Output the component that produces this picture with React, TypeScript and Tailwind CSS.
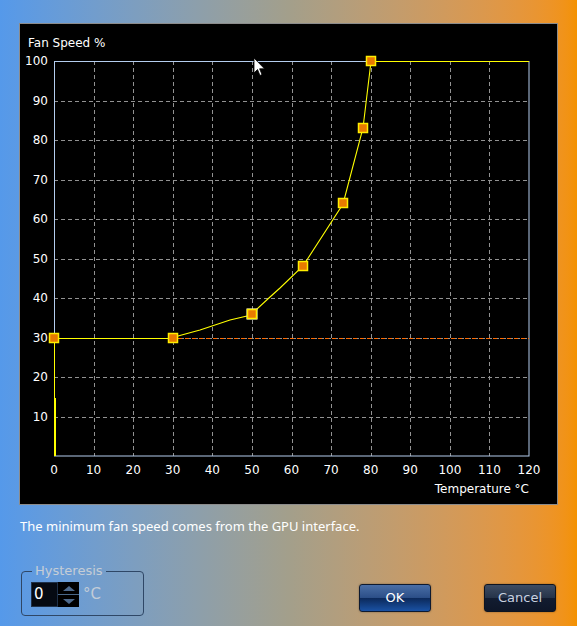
import React from "react";

const PX0 = 54;
const PY0 = 456;
const PW = 475;
const PH = 395;
const xs = (t: number) => PX0 + (t * PW) / 120;
const ys = (s: number) => PY0 - (s * PH) / 100;

const points: [number, number][] = [
  [0, 30],
  [30, 30],
  [50, 36],
  [63, 48],
  [73, 64],
  [78, 83],
  [80, 100],
];

function Chart() {
  const vlines = Array.from({ length: 11 }, (_, i) => Math.round(xs((i + 1) * 10)) + 0.5);
  const hlines = Array.from({ length: 9 }, (_, i) => Math.round(ys((i + 1) * 10)) + 0.5);
  const curve =
    "M54.5,338.5 L173,338.5 L178,336 L200,330 L230,320 L247,316 L252,313.5 L270,297 L280,288 L303,266 L343,204 L363,128 L371,61.5 L529,61.5";
  return (
    <svg
      width={537}
      height={480}
      viewBox="20 24 537 480"
      className="block"
      style={{ fontFamily: '"DejaVu Sans", sans-serif' }}
    >
      {vlines.map((x, i) => (
        <line key={"v" + i} x1={x} y1={61} x2={x} y2={456} stroke="#929292" strokeWidth={1} strokeDasharray="4 3" />
      ))}
      {hlines.map((y, i) => (
        <line key={"h" + i} x1={54} y1={y} x2={529} y2={y} stroke="#929292" strokeWidth={1} strokeDasharray="4 3" />
      ))}
      <rect x={54.5} y={61.5} width={474.5} height={394.5} fill="none" stroke="#b4cdee" strokeWidth={1} />
      <line x1={178} y1={338.5} x2={529} y2={338.5} stroke="#ff6a00" strokeWidth={1} strokeDasharray="4 3" />
      <line x1={54.5} y1={338} x2={54.5} y2={456} stroke="#ffff00" strokeWidth={1} />
      <line x1={55.5} y1={398} x2={55.5} y2={456} stroke="#ffff00" strokeWidth={1} />
      <path d={curve} fill="none" stroke="#ffff00" strokeWidth={1.1} />
      {points.map(([t, s], i) => {
        const cx = Math.round(xs(t));
        const cy = Math.round(ys(s));
        return (
          <g key={"p" + i}>
            {i === 2 && <rect x={cx - 5.5} y={cy - 5.5} width={11} height={11} fill="#ffffff" />}
            <rect x={cx - 4.5} y={cy - 4.5} width={9} height={9} fill="#e87a00" stroke="#ffee00" strokeWidth={1.5} />
          </g>
        );
      })}
      <text x={28} y={47} fill="#ffffff" fontSize={12}>
        Fan Speed %
      </text>
      {Array.from({ length: 10 }, (_, i) => (i + 1) * 10).map((v) => (
        <text key={"yl" + v} x={48} y={ys(v) + 4} fill="#ffffff" fontSize={12} textAnchor="end">
          {v}
        </text>
      ))}
      {Array.from({ length: 13 }, (_, i) => i * 10).map((v) => (
        <text key={"xl" + v} x={xs(v)} y={474} fill="#ffffff" fontSize={12} textAnchor="middle">
          {v}
        </text>
      ))}
      <text x={529} y={493} fill="#ffffff" fontSize={12} textAnchor="end">
        Temperature °C
      </text>
      <path
        d="M254,58 L254,73 L257.5,69.5 L260,75.5 L262,74.5 L259.6,68.8 L264.5,68.8 Z"
        fill="#ffffff"
        stroke="#000000"
        strokeWidth={0.8}
      />
    </svg>
  );
}

export default function App() {
  return (
    <div
      className="relative w-[577px] h-[626px] overflow-hidden bg-linear-to-r from-[#5599ea] via-[#a39f8b] to-[#f49200] flex flex-col"
      style={{ fontFamily: '"DejaVu Sans", sans-serif' }}
    >
      <div className="ml-[20px] mt-[24px] w-[537px] h-[480px] bg-black shadow-[0_0_0_1px_#8c8c8c]">
        <Chart />
      </div>
      <div
        className="ml-[20px] mt-[14px] text-[13px] text-white leading-[16px]"
        style={{ fontFamily: '"Noto Sans", sans-serif' }}
      >
        The minimum fan speed comes from the GPU interface.
      </div>
      <div className="flex items-start mt-[34px] ml-[21px]">
        <fieldset className="w-[123px] h-[52px] border border-[#2f4766] rounded-[4px] px-[9px] -mt-[4px]">
          <legend className="ml-[1px] px-[3px] text-[13px] leading-[14px] text-[#c5cdd6]">Hysteresis</legend>
          <div className="flex items-center mt-[4px]">
            <div className="w-[27px] h-[25px] bg-[#050a12] border border-[#1e3048] text-white text-[15px] leading-[23px] pl-[2px]">
              0
            </div>
            <div className="w-[21px] h-[25px] bg-[#000000] flex flex-col">
              <div className="flex-1 flex items-center justify-center border-b border-[#4a6888]">
                <svg width="14" height="7" viewBox="0 0 14 7">
                  <path d="M1 6 L7 1 L13 6 Z" fill="#4e6a8c" />
                </svg>
              </div>
              <div className="flex-1 flex items-center justify-center">
                <svg width="14" height="7" viewBox="0 0 14 7">
                  <path d="M1 1 L7 6 L13 1 Z" fill="#4e6a8c" />
                </svg>
              </div>
            </div>
            <span className="ml-[4px] text-[15px] text-[#c2ccd8]">°C</span>
          </div>
        </fieldset>
        <button className="ml-[215px] mt-[16px] w-[72px] h-[28px] rounded-[3px] border border-[#0e1a30] text-white text-[13px] bg-[linear-gradient(to_bottom,#4a6ea6_0%,#2c4f88_48%,#0c2a5c_52%,#1a52a4_100%)] shadow-[0_0_2px_rgba(0,0,0,0.4)]">
          OK
        </button>
        <button className="ml-[53px] mt-[16px] w-[72px] h-[28px] rounded-[3px] border border-[#0e1420] text-[#c9d2e0] text-[13px] bg-[linear-gradient(to_bottom,#3e4c62_0%,#26344a_48%,#121c30_52%,#0e1628_100%)] shadow-[0_0_2px_rgba(0,0,0,0.4)]">
          Cancel
        </button>
      </div>
    </div>
  );
}
